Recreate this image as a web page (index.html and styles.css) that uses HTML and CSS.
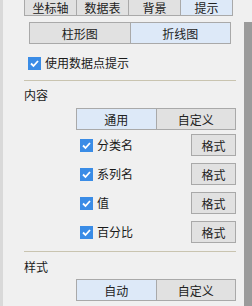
FILE: index.html
```html
<!DOCTYPE html>
<html lang="zh-CN">
  <head>
    <meta charset="UTF-8" />
    <title>提示</title>
    <link rel="stylesheet" href="styles.css">
  </head>
  <body>
    <div class="page">
      <div class="main">
        <!-- Top tabs -->
        <div class="tabs">
          <div class="tab">坐标轴</div>
          <div class="tab">数据表</div>
          <div class="tab">背景</div>
          <div class="tab active">提示</div>
        </div>

        <div class="seg seg-chart">
          <div class="seg-item">柱形图</div>
          <div class="seg-item active">折线图</div>
        </div>

        <label class="check check-top">
          <span class="box"><svg viewBox="0 0 13 13"><path d="M3 6.5l2.5 2.5 4.5-5" /></svg></span>
          使用数据点提示
        </label>

        <div class="sep"></div>

        <!-- Content -->
        <div class="label">内容</div>
        <div class="seg seg-wide">
          <div class="seg-item active">通用</div>
          <div class="seg-item">自定义</div>
        </div>

        <div class="rows">
          <div class="row">
            <label class="check">
              <span class="box"><svg viewBox="0 0 13 13"><path d="M3 6.5l2.5 2.5 4.5-5" /></svg></span>
              分类名
            </label>
            <button class="fmt">格式</button>
          </div>
          <div class="row">
            <label class="check">
              <span class="box"><svg viewBox="0 0 13 13"><path d="M3 6.5l2.5 2.5 4.5-5" /></svg></span>
              系列名
            </label>
            <button class="fmt">格式</button>
          </div>
          <div class="row">
            <label class="check">
              <span class="box"><svg viewBox="0 0 13 13"><path d="M3 6.5l2.5 2.5 4.5-5" /></svg></span>
              值
            </label>
            <button class="fmt">格式</button>
          </div>
          <div class="row">
            <label class="check">
              <span class="box"><svg viewBox="0 0 13 13"><path d="M3 6.5l2.5 2.5 4.5-5" /></svg></span>
              百分比
            </label>
            <button class="fmt">格式</button>
          </div>
        </div>

        <div class="sep sep-bottom"></div>

        <!-- Style -->
        <div class="label label-style">样式</div>
        <div class="seg seg-wide">
          <div class="seg-item active">自动</div>
          <div class="seg-item">自定义</div>
        </div>
      </div>
      <div class="scroll"></div>
    </div>
  </body>
</html>
```
FILE: styles.css
```css
html,
body {
  margin: 0;
  height: 100%;
  overflow: hidden;
}
body {
  background: #f0f0f0;
  color: #1a1a1a;
  font-family: "Noto Sans CJK SC", "Microsoft YaHei", sans-serif;
  font-size: 12px;
}
.page {
  display: flex;
  height: 306px;
}
.main {
  flex: 1;
  border-left: 3px solid #d9d9d9;
  padding: 0 8px 0 21px;
}
.scroll {
  width: 8px;
  margin-top: 22px;
  background: #9b9b9b;
}

/* tabs */
.tabs {
  display: flex;
  width: 209px;
  height: 20px;
  margin-top: -4px;
  box-sizing: border-box;
  border: 1px solid #a9a9a9;
}
.tab {
  flex: 1;
  display: flex;
  align-items: center;
  justify-content: center;
  padding-top: 2px;
  background: #e1e1e1;
  color: #222;
  border-left: 1px solid #a9a9a9;
}
.tab:first-child {
  border-left: none;
}
.tab.active {
  background: #dde9f8;
}

/* segmented buttons */
.seg {
  display: flex;
  height: 22px;
  box-sizing: border-box;
  border: 1px solid #a9a9a9;
}
.seg-item {
  flex: 1;
  display: flex;
  align-items: center;
  justify-content: center;
  background: #e1e1e1;
  color: #222;
  border-left: 1px solid #a9a9a9;
}
.seg-item:first-child {
  border-left: none;
}
.seg-item.active {
  background: #dde9f8;
}
.seg-chart {
  width: 202px;
  margin: 6px 0 0 5px;
}
.seg-wide {
  width: 160px;
  margin: 0 0 0 52px;
}

/* checkbox */
.check {
  display: flex;
  align-items: center;
  height: 16px;
  line-height: 16px;
}
.box {
  width: 13px;
  height: 13px;
  margin-right: 4px;
  background: #3a8ce6;
  display: flex;
}
.box svg {
  width: 13px;
  height: 13px;
}
.box path {
  fill: none;
  stroke: #fff;
  stroke-width: 1.8;
}
.check-top {
  margin: 11px 0 0 4px;
}

.sep {
  margin-top: 9px;
  border-top: 1px solid #c9c4b0;
}
.sep-bottom {
  margin-top: 8px;
}
.label {
  height: 16px;
  line-height: 16px;
  margin-top: 6px;
  margin-bottom: 5px;
}
.label-style {
  margin-top: 7px;
  margin-bottom: 4px;
}

/* rows */
.rows {
  margin-top: 4px;
  display: flex;
  flex-direction: column;
  gap: 7px;
}
.row {
  display: flex;
  align-items: center;
  height: 22px;
  padding-left: 56px;
}
.fmt {
  margin-left: auto;
  width: 45px;
  height: 22px;
  padding: 0;
  background: #e1e1e1;
  border: 1px solid #a9a9a9;
  color: #222;
  font-family: inherit;
  font-size: 12px;
}
```
